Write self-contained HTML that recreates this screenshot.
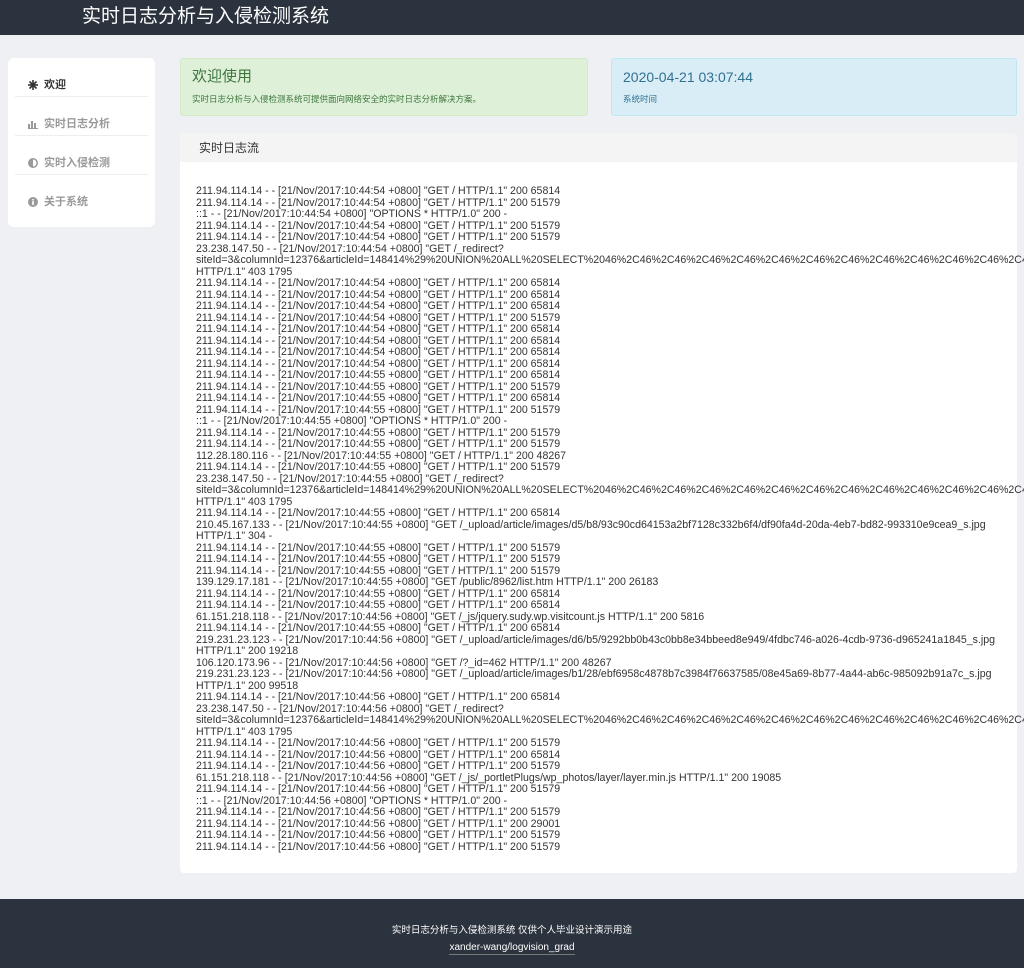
<!DOCTYPE html>
<html><head><meta charset="utf-8">
<style>
*{margin:0;padding:0;box-sizing:border-box}
body{width:1024px;height:968px;background:#eef0f3;font-family:"Liberation Sans","Noto Sans CJK SC",sans-serif;position:relative;overflow:hidden;color:#333}
.hdr{position:absolute;left:0;top:0;width:1024px;height:35px;background:#2b333e;color:#fff;font-size:19px;line-height:33px;padding-left:82px}
.side{position:absolute;left:8px;top:58px;width:147px;height:169px;background:#fff;border-radius:6px;padding:0 7px}
.side div{height:39px;border-bottom:1px solid #eee;font-size:11px;font-weight:bold;color:#999;line-height:1;padding-top:22px;padding-left:13px;position:relative}
.side div:last-child{border-bottom:none}
.side div.act{color:#333}
.side svg{position:absolute;left:13px;top:22px}
.side span{margin-left:16px}
.green{position:absolute;left:180px;top:58px;width:408px;height:58px;background:#dff0d8;border:1px solid #d6e9c6;border-radius:3px;color:#3c763d;padding:9px 11px}
.blue{position:absolute;left:611px;top:58px;width:406px;height:58px;background:#d9edf7;border:1px solid #bce8f1;border-radius:3px;color:#31708f;padding:9px 11px}
.t1{font-size:15px;line-height:18px}
.t2{font-size:8.5px;margin-top:7px}
.panel{position:absolute;left:180px;top:133px;width:837px;height:740px;background:#fff;border-radius:4px}
.ph{height:29px;background:#f4f4f4;font-size:12px;line-height:30px;padding-left:19px;border-radius:4px 4px 0 0}
.log{position:absolute;left:16px;top:53px;font-size:10.6px;line-height:11.5px;white-space:nowrap;color:#333}
.foot{position:absolute;left:0;top:899px;width:1024px;height:69px;background:#2b333e;color:#fff;text-align:center;font-size:9.5px}
.foot p{margin-top:23px}
.foot a{display:inline-block;margin-top:6px;color:#fff;text-decoration:none;border-bottom:1px solid #777;font-size:10px;padding-bottom:1px}
</style></head><body>
<div class="hdr">实时日志分析与入侵检测系统</div>
<div class="side">
<div class="act"><svg width="10" height="10" viewBox="0 0 10 10"><g stroke="#333" stroke-width="1.6"><line x1="5" y1="0" x2="5" y2="10"/><line x1="0" y1="5" x2="10" y2="5"/><line x1="1.5" y1="1.5" x2="8.5" y2="8.5"/><line x1="8.5" y1="1.5" x2="1.5" y2="8.5"/></g></svg><span>欢迎</span></div>
<div><svg width="10" height="10" viewBox="0 0 10 10"><g fill="#999"><rect x="0" y="5" width="2" height="5"/><rect x="3" y="2" width="2" height="8"/><rect x="6" y="4" width="2" height="6"/><rect x="0" y="9" width="10" height="1"/></g></svg><span>实时日志分析</span></div>
<div><svg width="10" height="10" viewBox="0 0 10 10"><circle cx="5" cy="5" r="4.2" fill="none" stroke="#999" stroke-width="1.5"/><path d="M5 1 A4 4 0 0 0 5 9Z" fill="#999"/></svg><span>实时入侵检测</span></div>
<div><svg width="10" height="10" viewBox="0 0 10 10"><circle cx="5" cy="5" r="5" fill="#999"/><rect x="4.2" y="4" width="1.6" height="4" fill="#fff"/><rect x="4.2" y="2" width="1.6" height="1.4" fill="#fff"/></svg><span>关于系统</span></div>
</div>
<div class="green"><div class="t1">欢迎使用</div><div class="t2">实时日志分析与入侵检测系统可提供面向网络安全的实时日志分析解决方案。</div></div>
<div class="blue"><div class="t1" style="font-size:14px">2020-04-21 03:07:44</div><div class="t2">系统时间</div></div>
<div class="panel"><div class="ph">实时日志流</div>
<div class="log">
211.94.114.14 - - [21/Nov/2017:10:44:54 +0800] "GET / HTTP/1.1" 200 65814<br>
211.94.114.14 - - [21/Nov/2017:10:44:54 +0800] "GET / HTTP/1.1" 200 51579<br>
::1 - - [21/Nov/2017:10:44:54 +0800] "OPTIONS * HTTP/1.0" 200 -<br>
211.94.114.14 - - [21/Nov/2017:10:44:54 +0800] "GET / HTTP/1.1" 200 51579<br>
211.94.114.14 - - [21/Nov/2017:10:44:54 +0800] "GET / HTTP/1.1" 200 51579<br>
23.238.147.50 - - [21/Nov/2017:10:44:54 +0800] "GET /_redirect?<br>
siteId=3&amp;columnId=12376&amp;articleId=148414%29%20UNION%20ALL%20SELECT%2046%2C46%2C46%2C46%2C46%2C46%2C46%2C46%2C46%2C46%2C46%2C46%2C46<br>
HTTP/1.1" 403 1795<br>
211.94.114.14 - - [21/Nov/2017:10:44:54 +0800] "GET / HTTP/1.1" 200 65814<br>
211.94.114.14 - - [21/Nov/2017:10:44:54 +0800] "GET / HTTP/1.1" 200 65814<br>
211.94.114.14 - - [21/Nov/2017:10:44:54 +0800] "GET / HTTP/1.1" 200 65814<br>
211.94.114.14 - - [21/Nov/2017:10:44:54 +0800] "GET / HTTP/1.1" 200 51579<br>
211.94.114.14 - - [21/Nov/2017:10:44:54 +0800] "GET / HTTP/1.1" 200 65814<br>
211.94.114.14 - - [21/Nov/2017:10:44:54 +0800] "GET / HTTP/1.1" 200 65814<br>
211.94.114.14 - - [21/Nov/2017:10:44:54 +0800] "GET / HTTP/1.1" 200 65814<br>
211.94.114.14 - - [21/Nov/2017:10:44:54 +0800] "GET / HTTP/1.1" 200 65814<br>
211.94.114.14 - - [21/Nov/2017:10:44:55 +0800] "GET / HTTP/1.1" 200 65814<br>
211.94.114.14 - - [21/Nov/2017:10:44:55 +0800] "GET / HTTP/1.1" 200 51579<br>
211.94.114.14 - - [21/Nov/2017:10:44:55 +0800] "GET / HTTP/1.1" 200 65814<br>
211.94.114.14 - - [21/Nov/2017:10:44:55 +0800] "GET / HTTP/1.1" 200 51579<br>
::1 - - [21/Nov/2017:10:44:55 +0800] "OPTIONS * HTTP/1.0" 200 -<br>
211.94.114.14 - - [21/Nov/2017:10:44:55 +0800] "GET / HTTP/1.1" 200 51579<br>
211.94.114.14 - - [21/Nov/2017:10:44:55 +0800] "GET / HTTP/1.1" 200 51579<br>
112.28.180.116 - - [21/Nov/2017:10:44:55 +0800] "GET / HTTP/1.1" 200 48267<br>
211.94.114.14 - - [21/Nov/2017:10:44:55 +0800] "GET / HTTP/1.1" 200 51579<br>
23.238.147.50 - - [21/Nov/2017:10:44:55 +0800] "GET /_redirect?<br>
siteId=3&amp;columnId=12376&amp;articleId=148414%29%20UNION%20ALL%20SELECT%2046%2C46%2C46%2C46%2C46%2C46%2C46%2C46%2C46%2C46%2C46%2C46%2C46<br>
HTTP/1.1" 403 1795<br>
211.94.114.14 - - [21/Nov/2017:10:44:55 +0800] "GET / HTTP/1.1" 200 65814<br>
210.45.167.133 - - [21/Nov/2017:10:44:55 +0800] "GET /_upload/article/images/d5/b8/93c90cd64153a2bf7128c332b6f4/df90fa4d-20da-4eb7-bd82-993310e9cea9_s.jpg<br>
HTTP/1.1" 304 -<br>
211.94.114.14 - - [21/Nov/2017:10:44:55 +0800] "GET / HTTP/1.1" 200 51579<br>
211.94.114.14 - - [21/Nov/2017:10:44:55 +0800] "GET / HTTP/1.1" 200 51579<br>
211.94.114.14 - - [21/Nov/2017:10:44:55 +0800] "GET / HTTP/1.1" 200 51579<br>
139.129.17.181 - - [21/Nov/2017:10:44:55 +0800] "GET /public/8962/list.htm HTTP/1.1" 200 26183<br>
211.94.114.14 - - [21/Nov/2017:10:44:55 +0800] "GET / HTTP/1.1" 200 65814<br>
211.94.114.14 - - [21/Nov/2017:10:44:55 +0800] "GET / HTTP/1.1" 200 65814<br>
61.151.218.118 - - [21/Nov/2017:10:44:56 +0800] "GET /_js/jquery.sudy.wp.visitcount.js HTTP/1.1" 200 5816<br>
211.94.114.14 - - [21/Nov/2017:10:44:55 +0800] "GET / HTTP/1.1" 200 65814<br>
219.231.23.123 - - [21/Nov/2017:10:44:56 +0800] "GET /_upload/article/images/d6/b5/9292bb0b43c0bb8e34bbeed8e949/4fdbc746-a026-4cdb-9736-d965241a1845_s.jpg<br>
HTTP/1.1" 200 19218<br>
106.120.173.96 - - [21/Nov/2017:10:44:56 +0800] "GET /?_id=462 HTTP/1.1" 200 48267<br>
219.231.23.123 - - [21/Nov/2017:10:44:56 +0800] "GET /_upload/article/images/b1/28/ebf6958c4878b7c3984f76637585/08e45a69-8b77-4a44-ab6c-985092b91a7c_s.jpg<br>
HTTP/1.1" 200 99518<br>
211.94.114.14 - - [21/Nov/2017:10:44:56 +0800] "GET / HTTP/1.1" 200 65814<br>
23.238.147.50 - - [21/Nov/2017:10:44:56 +0800] "GET /_redirect?<br>
siteId=3&amp;columnId=12376&amp;articleId=148414%29%20UNION%20ALL%20SELECT%2046%2C46%2C46%2C46%2C46%2C46%2C46%2C46%2C46%2C46%2C46%2C46%2C46<br>
HTTP/1.1" 403 1795<br>
211.94.114.14 - - [21/Nov/2017:10:44:56 +0800] "GET / HTTP/1.1" 200 51579<br>
211.94.114.14 - - [21/Nov/2017:10:44:56 +0800] "GET / HTTP/1.1" 200 65814<br>
211.94.114.14 - - [21/Nov/2017:10:44:56 +0800] "GET / HTTP/1.1" 200 51579<br>
61.151.218.118 - - [21/Nov/2017:10:44:56 +0800] "GET /_js/_portletPlugs/wp_photos/layer/layer.min.js HTTP/1.1" 200 19085<br>
211.94.114.14 - - [21/Nov/2017:10:44:56 +0800] "GET / HTTP/1.1" 200 51579<br>
::1 - - [21/Nov/2017:10:44:56 +0800] "OPTIONS * HTTP/1.0" 200 -<br>
211.94.114.14 - - [21/Nov/2017:10:44:56 +0800] "GET / HTTP/1.1" 200 51579<br>
211.94.114.14 - - [21/Nov/2017:10:44:56 +0800] "GET / HTTP/1.1" 200 29001<br>
211.94.114.14 - - [21/Nov/2017:10:44:56 +0800] "GET / HTTP/1.1" 200 51579<br>
211.94.114.14 - - [21/Nov/2017:10:44:56 +0800] "GET / HTTP/1.1" 200 51579
</div></div>
<div class="foot"><p>实时日志分析与入侵检测系统 仅供个人毕业设计演示用途</p><a>xander-wang/logvision_grad</a></div>
</body></html>
